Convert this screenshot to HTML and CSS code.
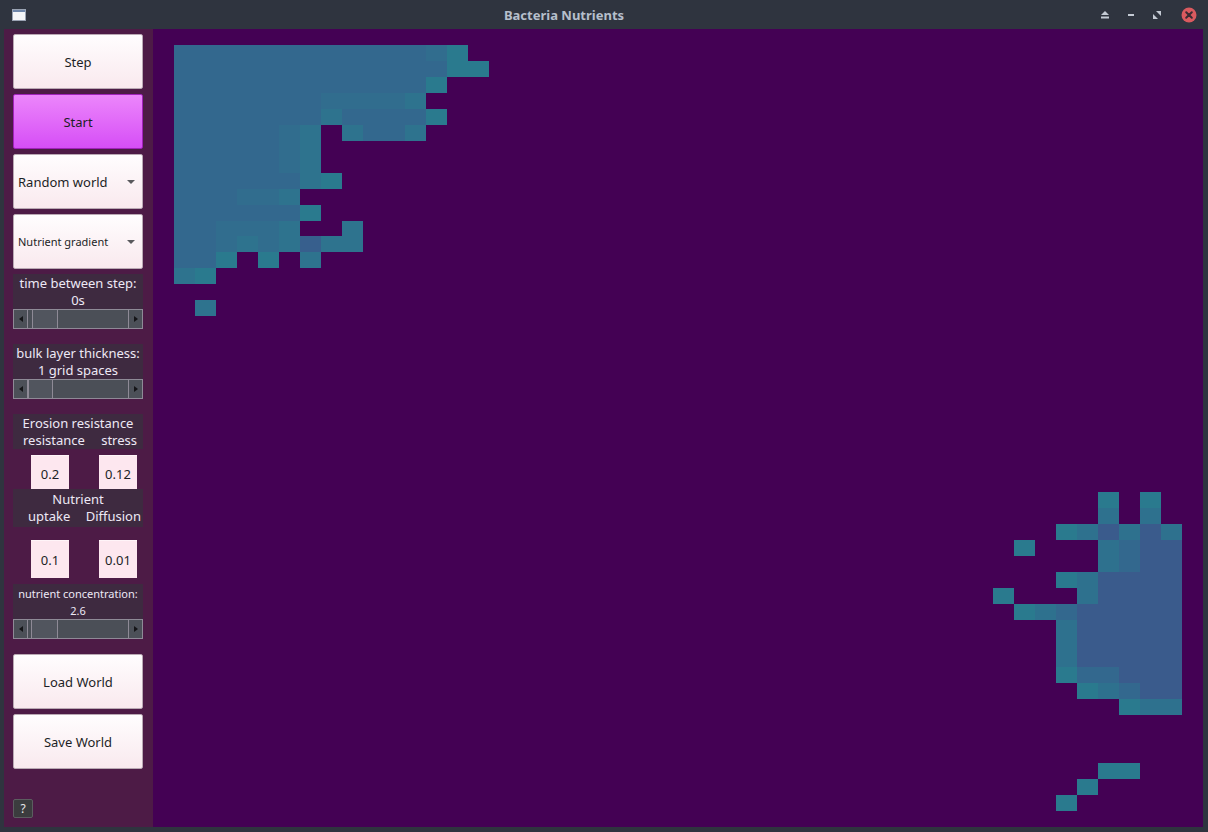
FILE: index.html
```html
<!DOCTYPE html>
<html>
<head>
<meta charset="utf-8">
<title>Bacteria Nutrients</title>
<link rel="stylesheet" href="styles.css">
</head>
<body>
<div class="window">
  <header class="titlebar">
    <div class="app-icon"><span class="app-icon-bar"></span></div>
    <div class="title">Bacteria Nutrients</div>
    <div class="controls">
      <svg class="ctl" width="10" height="10" viewBox="0 0 10 10"><polygon points="1,5 5,1 9,5" fill="#c4cad4"/><rect x="1" y="6.5" width="8" height="2" fill="#c4cad4"/></svg>
      <svg class="ctl" width="10" height="10" viewBox="0 0 10 10"><rect x="2" y="4" width="6" height="2" fill="#c4cad4"/></svg>
      <svg class="ctl" width="10" height="10" viewBox="0 0 10 10"><polygon points="4,1 9,1 9,6" fill="#c4cad4"/><polygon points="1,4 1,9 6,9" fill="#c4cad4"/></svg>
      <svg class="ctl close" width="16" height="16" viewBox="0 0 16 16"><circle cx="8" cy="8" r="7.5" fill="#da5a5f"/><path d="M5.2 5.2 L10.8 10.8 M10.8 5.2 L5.2 10.8" stroke="#3a2b33" stroke-width="2" stroke-linecap="round"/></svg>
    </div>
  </header>
  <div class="client">
    <aside class="panel">
      <button class="btn">Step</button>
      <button class="btn btn-start">Start</button>
      <div class="combo"><span>Random world</span><span class="arrow"></span></div>
      <div class="combo combo-small"><span>Nutrient gradient</span><span class="arrow"></span></div>

      <div class="label">time between step:<br>0s</div>
      <div class="slider"><span class="sbtn sbtn-l"><i class="tri-l"></i></span><span class="trough"><span class="thumb" style="margin-left:4px;width:26px"></span></span><span class="sbtn sbtn-r"><i class="tri-r"></i></span></div>

      <div class="label mt15">bulk layer thickness:<br>1 grid spaces</div>
      <div class="slider"><span class="sbtn sbtn-l"><i class="tri-l"></i></span><span class="trough"><span class="thumb" style="margin-left:0px;width:25px"></span></span><span class="sbtn sbtn-r"><i class="tri-r"></i></span></div>

      <div class="label mt15">
        <div>Erosion resistance</div>
        <div class="cols cols-ero"><span>resistance</span><span>stress</span></div>
      </div>
      <div class="inputs inputs-a"><span class="field">0.2</span><span class="field">0.12</span></div>
      <div class="label label-nut">
        <div>Nutrient</div>
        <div class="cols cols-nut"><span>uptake</span><span>Diffusion</span></div>
      </div>
      <div class="inputs inputs-b"><span class="field">0.1</span><span class="field">0.01</span></div>

      <div class="label label-small">nutrient concentration:<br>2.6</div>
      <div class="slider"><span class="sbtn sbtn-l"><i class="tri-l"></i></span><span class="trough"><span class="thumb" style="margin-left:3px;width:27px"></span></span><span class="sbtn sbtn-r"><i class="tri-r"></i></span></div>

      <button class="btn mt15">Load World</button>
      <button class="btn">Save World</button>

      <button class="help">?</button>
    </aside>
    <main class="canvas">
      <svg class="grid" viewBox="0 0 50 50" preserveAspectRatio="none" shape-rendering="crispEdges">
        <g fill="#33688e">
          <rect x="1" y="1" width="12" height="1"/>
          <rect x="1" y="2" width="13" height="1"/>
          <rect x="1" y="3" width="12" height="1"/>
          <rect x="1" y="4" width="7" height="1"/>
          <rect x="1" y="5" width="7" height="1"/>
          <rect x="9" y="5" width="4" height="1"/>
          <rect x="1" y="6" width="5" height="1"/>
          <rect x="10" y="6" width="2" height="1"/>
          <rect x="1" y="7" width="5" height="1"/>
          <rect x="1" y="8" width="5" height="1"/>
          <rect x="1" y="9" width="6" height="1"/>
          <rect x="1" y="10" width="3" height="1"/>
          <rect x="1" y="11" width="6" height="1"/>
          <rect x="1" y="12" width="2" height="1"/>
          <rect x="1" y="13" width="2" height="1"/>
          <rect x="1" y="14" width="2" height="1"/>
        </g>
        <g fill="#316d8e">
          <rect x="13" y="1" width="1" height="1"/>
          <rect x="8" y="4" width="4" height="1"/>
          <rect x="6" y="6" width="1" height="3"/>
          <rect x="4" y="10" width="2" height="1"/>
          <rect x="3" y="12" width="3" height="1"/>
          <rect x="3" y="13" width="1" height="1"/>
          <rect x="5" y="13" width="1" height="1"/>
        </g>
        <g fill="#2e738e">
          <rect x="12" y="4" width="1" height="1"/>
          <rect x="8" y="5" width="1" height="1"/>
          <rect x="7" y="6" width="1" height="4"/>
          <rect x="9" y="6" width="1" height="1"/>
          <rect x="12" y="6" width="1" height="1"/>
          <rect x="6" y="10" width="1" height="1"/>
          <rect x="6" y="12" width="1" height="1"/>
          <rect x="9" y="12" width="1" height="1"/>
          <rect x="4" y="13" width="1" height="1"/>
          <rect x="6" y="13" width="1" height="1"/>
          <rect x="8" y="13" width="2" height="1"/>
          <rect x="7" y="14" width="1" height="1"/>
          <rect x="1" y="15" width="1" height="1"/>
          <rect x="2" y="17" width="1" height="1"/>
        </g>
        <g fill="#375f8d">
          <rect x="7" y="13" width="1" height="1"/>
        </g>
        <g fill="#2a7a8e">
          <rect x="14" y="1" width="1" height="1"/>
          <rect x="14" y="2" width="2" height="1"/>
          <rect x="13" y="3" width="1" height="1"/>
          <rect x="13" y="5" width="1" height="1"/>
          <rect x="8" y="9" width="1" height="1"/>
          <rect x="7" y="11" width="1" height="1"/>
          <rect x="3" y="14" width="1" height="1"/>
          <rect x="5" y="14" width="1" height="1"/>
          <rect x="2" y="15" width="1" height="1"/>
        </g>

        <g fill="#3a5b8c">
          <rect x="45" y="31" width="1" height="1"/>
          <rect x="47" y="31" width="1" height="1"/>
          <rect x="47" y="32" width="2" height="2"/>
          <rect x="45" y="34" width="4" height="2"/>
          <rect x="44" y="36" width="5" height="4"/>
          <rect x="46" y="40" width="3" height="1"/>
          <rect x="47" y="41" width="2" height="1"/>
        </g>
        <g fill="#33688e">
          <rect x="43" y="36" width="1" height="1"/>
          <rect x="44" y="40" width="2" height="1"/>
          <rect x="46" y="41" width="1" height="1"/>
          <rect x="46" y="32" width="1" height="2"/>
        </g>
        <g fill="#2e718e">
          <rect x="45" y="30" width="1" height="1"/>
          <rect x="47" y="30" width="1" height="1"/>
          <rect x="44" y="31" width="1" height="1"/>
          <rect x="46" y="31" width="1" height="1"/>
          <rect x="48" y="31" width="1" height="1"/>
          <rect x="45" y="32" width="1" height="2"/>
          <rect x="44" y="34" width="1" height="2"/>
          <rect x="42" y="36" width="1" height="1"/>
          <rect x="43" y="37" width="1" height="3"/>
          <rect x="45" y="41" width="1" height="1"/>
          <rect x="47" y="42" width="2" height="1"/>
        </g>
        <g fill="#2a7a8e">
          <rect x="45" y="29" width="1" height="1"/>
          <rect x="47" y="29" width="1" height="1"/>
          <rect x="43" y="31" width="1" height="1"/>
          <rect x="41" y="32" width="1" height="1"/>
          <rect x="43" y="34" width="1" height="1"/>
          <rect x="40" y="35" width="1" height="1"/>
          <rect x="41" y="36" width="1" height="1"/>
          <rect x="43" y="40" width="1" height="1"/>
          <rect x="44" y="41" width="1" height="1"/>
          <rect x="46" y="42" width="1" height="1"/>
          <rect x="45" y="46" width="2" height="1"/>
          <rect x="44" y="47" width="1" height="1"/>
          <rect x="43" y="48" width="1" height="1"/>
        </g>
      </svg>
    </main>
  </div>
</div>
</body>
</html>
```
FILE: styles.css
```css
* { box-sizing: border-box; }
html, body { margin: 0; padding: 0; }
body {
  width: 1208px;
  height: 832px;
  background: #2f343f;
  font-family: "Noto Sans", "Open Sans", sans-serif;
  overflow: hidden;
}
.window {
  display: flex;
  flex-direction: column;
  width: 1208px;
  height: 832px;
}
.titlebar {
  height: 29px;
  flex: none;
  display: flex;
  align-items: center;
  padding: 0 12px 0 12px;
}
.app-icon {
  width: 14px;
  height: 12px;
  background: #f4f5f7;
  border: 1px solid #9aa3b3;
  margin-top: 1px;
  position: relative;
}
.app-icon-bar {
  display: block;
  height: 2px;
  background: #6f86a9;
}
.title {
  flex: 1;
  text-align: center;
  color: #b6bfcc;
  font-weight: bold;
  font-size: 13px;
  padding-left: 2px;
}
.controls {
  display: flex;
  align-items: center;
  gap: 16px;
  margin-top: 1px;
}
.ctl { display: block; }
.close { margin-left: 3px; margin-right: -1px; }

.client {
  flex: 1;
  display: flex;
  margin: 0 5px 5px 4px;
  height: 798px;
}
.panel {
  width: 149px;
  flex: none;
  background: #4d1b46;
  display: flex;
  flex-direction: column;
  padding: 5px 10px 9px 9px;
}
.canvas {
  flex: 1;
  background: #440154;
}
.grid {
  display: block;
  width: 1050px;
  height: 798px;
}

.btn, .combo {
  height: 55px;
  flex: none;
  border: 1px solid #b9a9b3;
  border-radius: 2px;
  background: linear-gradient(#fffdfe, #f9e9ee);
  font-family: "Noto Sans", "Open Sans", sans-serif;
  font-size: 13px;
  color: #1c1f26;
  margin: 0 0 5px 0;
  padding: 0;
}
.btn-start {
  background: linear-gradient(#ec86fb, #d64ef6);
  border-color: #a122bb;
}
.combo {
  display: flex;
  align-items: center;
  justify-content: space-between;
  padding: 0 7px 0 4px;
}
.combo-small { font-size: 11px; }
.arrow {
  width: 0;
  height: 0;
  border-left: 4px solid transparent;
  border-right: 4px solid transparent;
  border-top: 4px solid #5a5a5e;
  margin-top: 1px;
}

.label {
  background: #3e2a40;
  color: #ede8f5;
  font-size: 13px;
  line-height: 17px;
  text-align: center;
  height: 35px;
  padding-top: 1px;
  flex: none;
}
.label-small {
  font-size: 11px;
  line-height: 17px;
  padding-top: 1px;
  margin-top: 6px;
}
.mt15 { margin-top: 10px; }
.cols {
  display: flex;
  justify-content: space-between;
}
.cols-ero { padding: 0 6px 0 10px; }
.cols-nut { padding: 0 2px 0 15px; }
.label-nut { height: 38px; padding-top: 2px; }

.inputs {
  display: flex;
  gap: 30px;
  padding-left: 18px;
  flex: none;
}
.inputs-a { height: 34px; margin-top: 6px; }
.inputs-b { height: 38px; margin-top: 13px; }
.field {
  width: 38px;
  height: 100%;
  background: #fde7ef;
  border-top: 1px solid #fff4f8;
  color: #1c1f26;
  font-size: 13px;
  display: flex;
  align-items: center;
  justify-content: center;
}
.inputs-a .field { padding-top: 3px; }

.slider {
  height: 20px;
  flex: none;
  display: flex;
  border: 1px solid #8e8a96;
  background: #4b4f57;
  margin-bottom: 5px;
}
.sbtn {
  width: 14px;
  flex: none;
  display: flex;
  align-items: center;
  justify-content: center;
  background: #4c5058;
}
.sbtn-l { border-right: 1px solid #8e8a96; }
.sbtn-r { border-left: 1px solid #8e8a96; }
.tri-l {
  width: 0; height: 0;
  border-top: 3px solid transparent;
  border-bottom: 3px solid transparent;
  border-right: 4px solid #151518;
}
.tri-r {
  width: 0; height: 0;
  border-top: 3px solid transparent;
  border-bottom: 3px solid transparent;
  border-left: 4px solid #151518;
}
.trough {
  flex: 1;
  display: flex;
}
.thumb {
  display: block;
  height: 100%;
  border-left: 1px solid #8e8a96;
  border-right: 1px solid #8e8a96;
  background: #51555e;
}

.help {
  margin-top: auto;
  width: 20px;
  height: 19px;
  padding: 0;
  background: #3b3c3e;
  border: 1px solid #5c5d60;
  border-radius: 2px;
  color: #e8e8ea;
  font-family: "Noto Sans", "Open Sans", sans-serif;
  font-size: 12px;
  line-height: 15px;
}
```
